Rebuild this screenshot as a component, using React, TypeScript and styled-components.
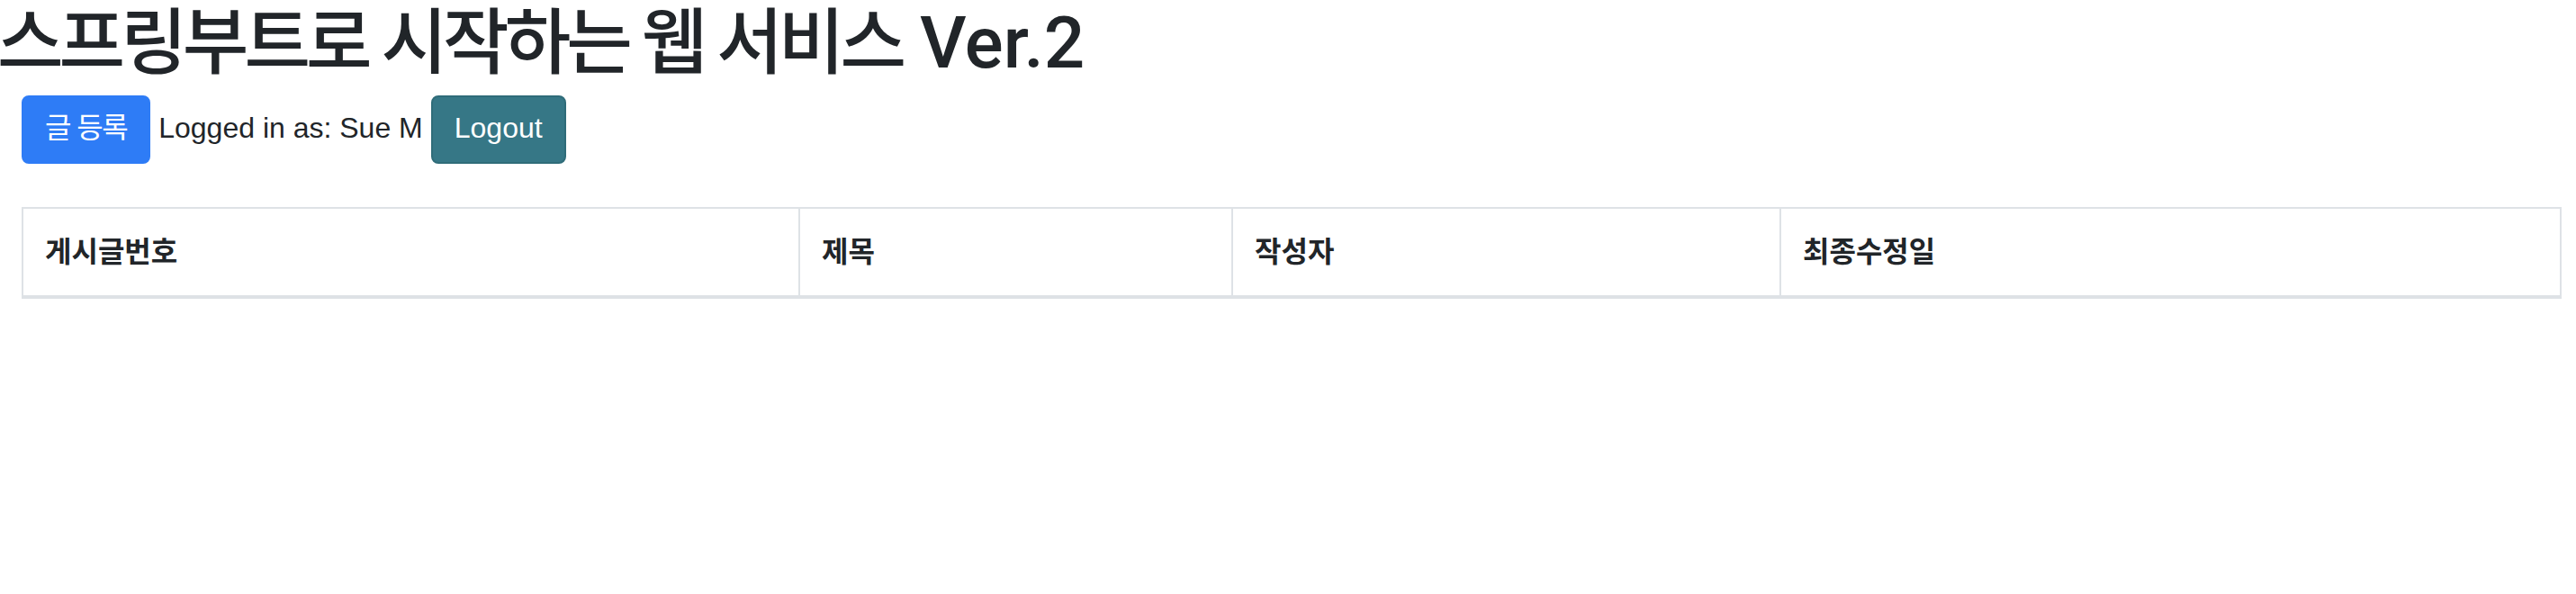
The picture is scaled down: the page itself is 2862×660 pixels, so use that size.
import React from 'react';
import styled, { createGlobalStyle } from 'styled-components';

const GlobalStyle = createGlobalStyle`
  body {
    margin: 0;
    background: #fff;
    color: #212529;
    font-family: "Liberation Sans", "Noto Sans CJK KR", sans-serif;
  }
`;

const Page = styled.div`
  padding: 0 18px 0 24px;
`;

const Title = styled.h1`
  margin: 0 0 0 -27px;
  font-family: Roboto, "Noto Sans CJK KR", sans-serif;
  font-size: 80px;
  font-weight: 500;
  line-height: 1.2;
  white-space: nowrap;
`;

const Hangul = styled.span`
  letter-spacing: -5px;
`;

const Toolbar = styled.div`
  display: flex;
  align-items: baseline;
  gap: 9px;
  margin-top: 10px;
  font-size: 32px;
  line-height: 48px;
`;

const Button = styled.button<{ $variant: 'primary' | 'teal'; $tight?: boolean }>`
  font-family: inherit;
  font-size: 32px;
  line-height: 48px;
  padding: 10px 24px 14px;
  border-radius: 8px;
  border: 2px solid ${({ $variant }) => ($variant === 'primary' ? '#2e7cf6' : '#2f6c79')};
  background: ${({ $variant }) => ($variant === 'primary' ? '#2e7cf6' : '#367786')};
  color: #fff;
  letter-spacing: ${({ $tight }) => ($tight ? '-1.5px' : 'normal')};
  white-space: pre;
  cursor: pointer;
`;

const UserText = styled.span`
  color: #212529;
`;

const Table = styled.table`
  margin-top: 48px;
  width: 2820px;
  table-layout: fixed;
  border-collapse: collapse;
  border: 2px solid #dee2e6;
`;

const HeadCell = styled.th`
  padding: 24px;
  border: 2px solid #dee2e6;
  border-bottom-width: 4px;
  text-align: left;
  vertical-align: bottom;
  font-size: 32px;
  line-height: 48px;
  font-weight: 700;
  color: #212529;
`;

const columns = [
  { label: '게시글번호', width: 863 },
  { label: '제목', width: 481 },
  { label: '작성자', width: 609 },
  { label: '최종수정일', width: 867 },
];

const App: React.FC = () => {
  return (
    <>
      <GlobalStyle />
      <Page>
        <Title>
          <Hangul>스프링부트로 시작하는 웹 서비스</Hangul> Ver.2
        </Title>
        <Toolbar>
          <Button $variant="primary" $tight>글 등록</Button>
          <UserText>Logged in as: Sue M</UserText>
          <Button $variant="teal">Logout</Button>
        </Toolbar>
        <Table>
          <colgroup>
            {columns.map((c) => (
              <col key={c.label} style={{ width: c.width }} />
            ))}
          </colgroup>
          <thead>
            <tr>
              {columns.map((c) => (
                <HeadCell key={c.label}>{c.label}</HeadCell>
              ))}
            </tr>
          </thead>
          <tbody />
        </Table>
      </Page>
    </>
  );
};

export default App;
